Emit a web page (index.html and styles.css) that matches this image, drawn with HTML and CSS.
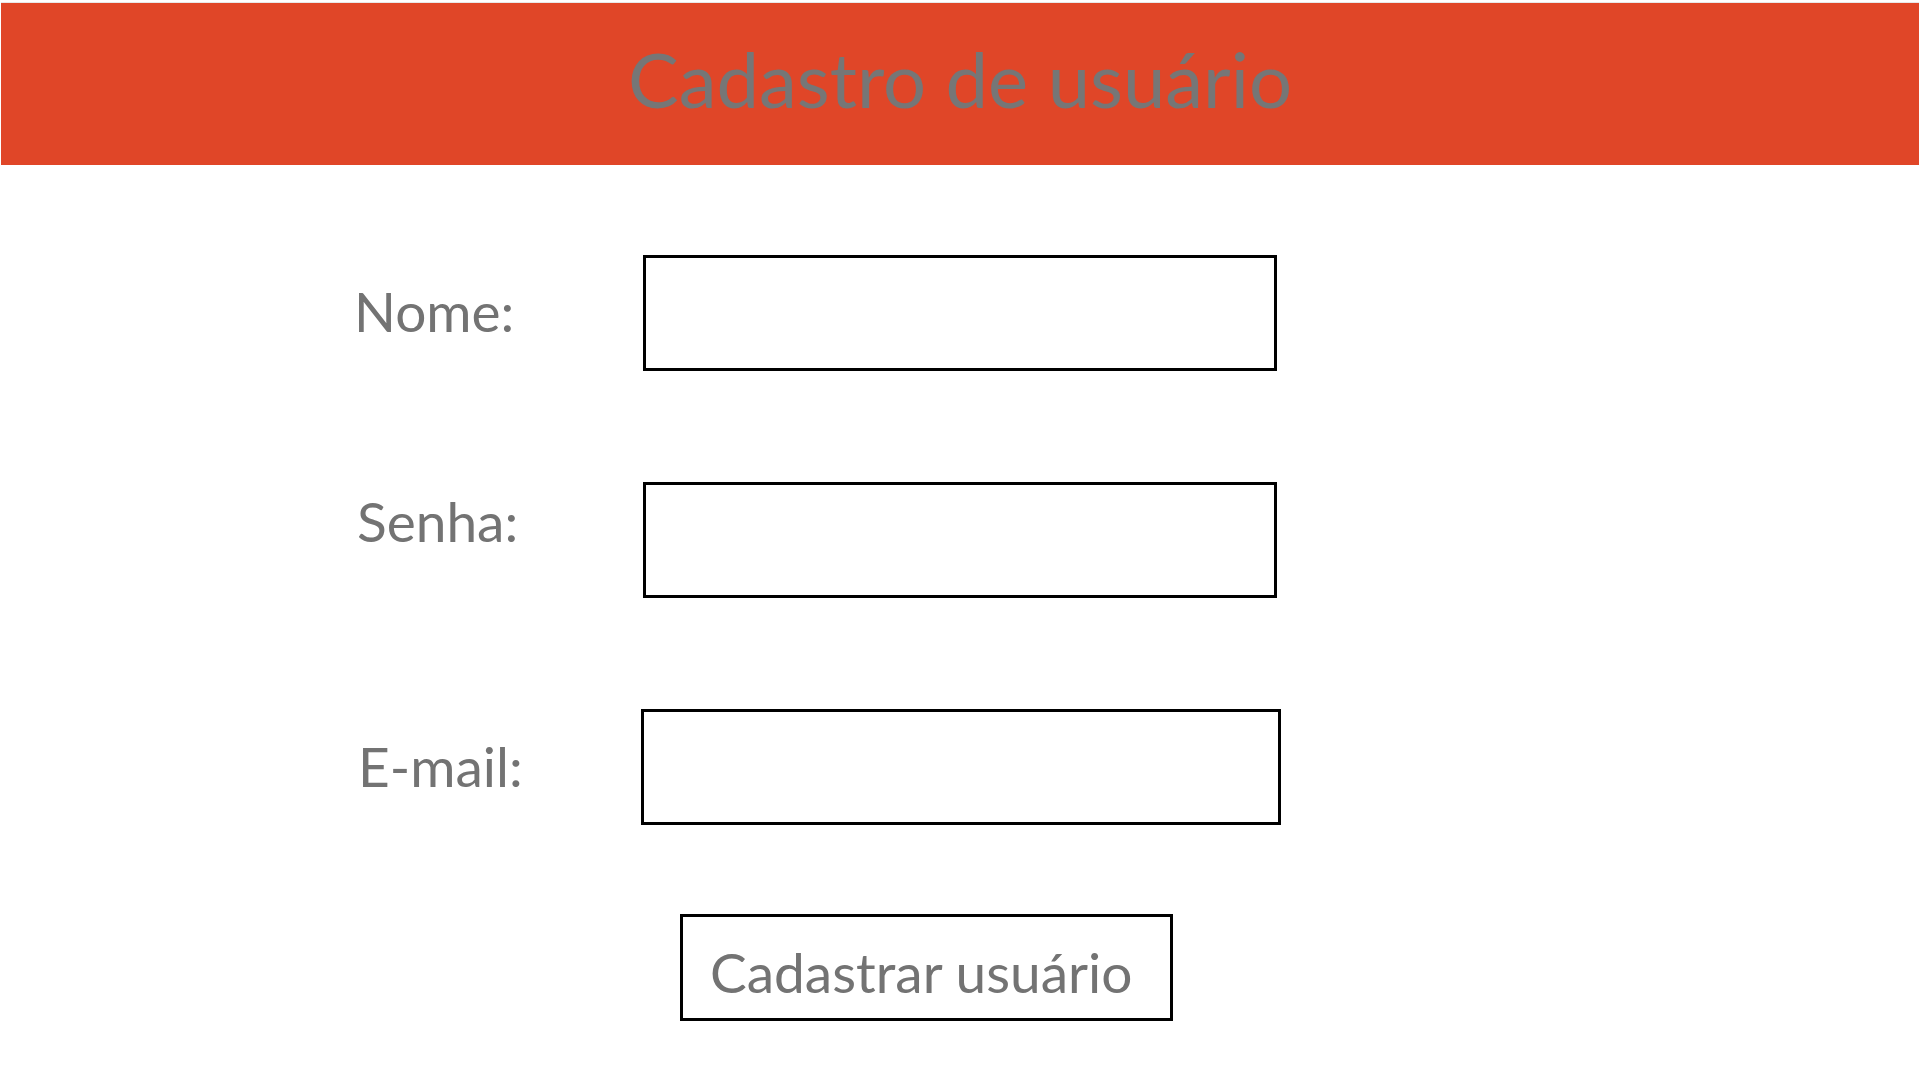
FILE: index.html
```html
<!DOCTYPE html>
<html lang="pt-BR">
<head>
<meta charset="utf-8">
<title>Cadastro de usuário</title>
<link rel="stylesheet" href="styles.css">
</head>
<body>
<header class="topbar">
  <h1 class="title">Cadastro de usuário</h1>
</header>
<main class="form">
  <div class="row">
    <label class="label" for="nome">Nome:</label>
    <input class="field" id="nome" type="text">
  </div>
  <div class="row">
    <label class="label label-senha" for="senha">Senha:</label>
    <input class="field" id="senha" type="password">
  </div>
  <div class="row">
    <label class="label label-email" for="email">E-mail:</label>
    <input class="field field-wide" id="email" type="email">
  </div>
  <div class="actions">
    <button class="submit" type="button">Cadastrar usuário</button>
  </div>
</main>
</body>
</html>
```

FILE: styles.css
```css
html, body {
  margin: 0;
  padding: 0;
  background: #ffffff;
}

body {
  font-family: "Lato", "Open Sans", "Liberation Sans", sans-serif;
  color: #737373;
  width: 1920px;
  height: 1080px;
  overflow: hidden;
}

.topbar {
  margin: 2px 1px 0 1px;
  border-top: 1px solid #e8e8e8;
  height: 162px;
  background: #e04628;
  display: flex;
  align-items: center;
  justify-content: center;
}

.title {
  margin: 0 0 10px 0;
  font-weight: 400;
  font-size: 76px;
  line-height: 1;
  color: #767676;
}

.form {
  padding-top: 90px;
  display: flex;
  flex-direction: column;
  gap: 111px;
}

.row {
  display: flex;
  align-items: center;
  margin-left: 354px;
  height: 116px;
}

.label {
  width: 289px;
  margin-top: -4px;
  font-size: 55px;
  line-height: 1;
  color: #737373;
}

.label-senha {
  margin-left: 3px;
  width: 286px;
  margin-top: -38px;
}

.label-email {
  margin-left: 4px;
  width: 285px;
  margin-top: -2px;
}

.field {
  box-sizing: border-box;
  width: 634px;
  height: 116px;
  border: 3px solid #000000;
  background: #ffffff;
  padding: 0;
  margin: 0;
  outline: none;
  border-radius: 0;
}

.field-wide {
  margin-left: -2px;
  width: 640px;
}

.actions {
  margin-top: -22px;
  padding-left: 680px;
}

.submit {
  box-sizing: border-box;
  width: 493px;
  height: 107px;
  border: 3px solid #000000;
  background: #ffffff;
  padding: 10px 0 0 27px;
  margin: 0;
  text-align: left;
  font-family: "Lato", "Open Sans", "Liberation Sans", sans-serif;
  font-size: 55px;
  line-height: 1;
  color: #737373;
  border-radius: 0;
}
```
